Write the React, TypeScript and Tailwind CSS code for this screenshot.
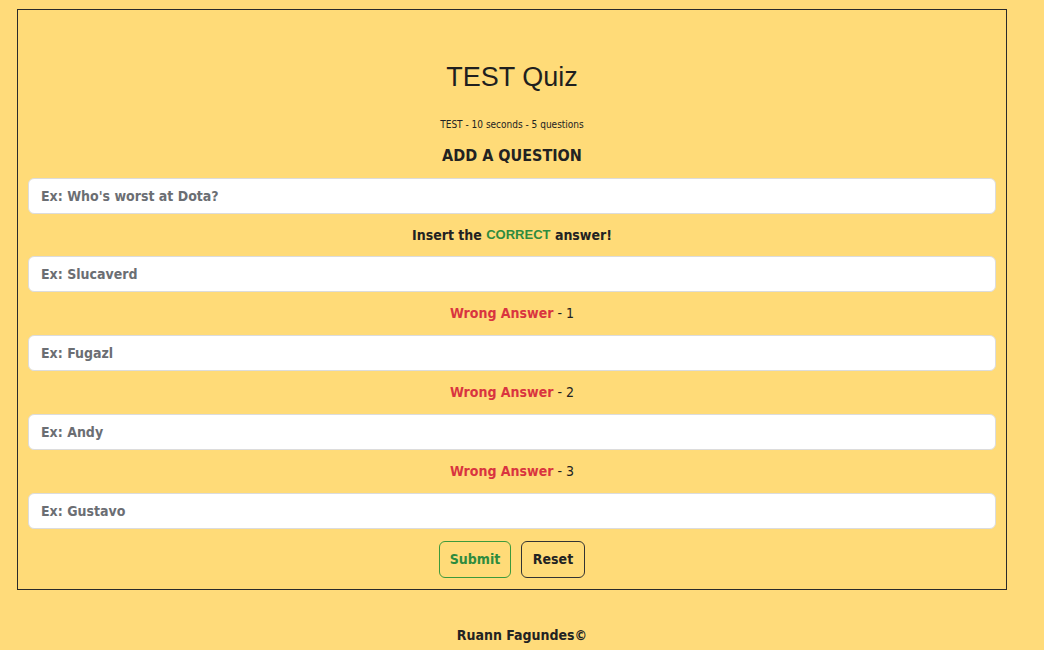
import React, { useState } from "react";

const narrow = "font-['Liberation_Sans_Narrow','DejaVu_Sans_Condensed',sans-serif]";

const App: React.FC = () => {
    const [question, setQuestion] = useState("");
    const [correct, setCorrect] = useState("");
    const [wrong, setWrong] = useState(["", "", ""]);
    const placeholders = ["Ex: Fugazl", "Ex: Andy", "Ex: Gustavo"];

    const handleReset = () => {
        setQuestion("");
        setCorrect("");
        setWrong(["", "", ""]);
    };

    const inputClass =
        "w-full h-[36px] rounded-md border border-[#dcdcdc] bg-white px-3 text-[14px] font-bold text-gray-700 placeholder:text-[#6b6e73] outline-none";

    return (
        <div className={`min-h-[650px] bg-[#ffdb7a] text-[#222] ${narrow}`}>
            <div className="pt-[9px] pl-[17px]">
                <div className="w-[990px] border border-[#2a2a2a] bg-[#ffdb78] px-[10px] pb-[11px]">
                    <h1 className="mt-[50px] text-center text-[27px] leading-[34px] font-['Liberation_Sans',sans-serif] text-[#1f1f1f]">
                        TEST Quiz
                    </h1>
                    <p className="mt-[24px] text-center text-[10px] leading-[14px]">TEST - 10 seconds - 5 questions</p>
                    <h2 className="mt-[14px] text-center text-[16px] leading-[20px] font-bold">ADD A QUESTION</h2>

                    <input
                        className={`${inputClass} mt-[12px]`}
                        placeholder="Ex: Who's worst at Dota?"
                        value={question}
                        onChange={(e) => setQuestion(e.target.value)}
                    />
                    <p className="h-[42px] flex items-center justify-center text-[14px] font-bold">
                        Insert the&nbsp;<span className="text-[#2e8b3e] font-['Liberation_Sans',sans-serif] text-[13px]">CORRECT</span>&nbsp;answer!
                    </p>
                    <input
                        className={inputClass}
                        placeholder="Ex: Slucaverd"
                        value={correct}
                        onChange={(e) => setCorrect(e.target.value)}
                    />

                    {wrong.map((w, idx) => (
                        <div key={idx}>
                            <p className="h-[43px] flex items-center justify-center text-[14px]">
                                <span className="text-[#d9343f] font-bold">Wrong Answer</span>&nbsp;- {idx + 1}
                            </p>
                            <input
                                className={inputClass}
                                placeholder={placeholders[idx]}
                                value={w}
                                onChange={(e) => {
                                    const next = [...wrong];
                                    next[idx] = e.target.value;
                                    setWrong(next);
                                }}
                            />
                        </div>
                    ))}

                    <div className="mt-[12px] flex justify-center gap-[10px]">
                        <button className="h-[37px] w-[72px] rounded-md border border-[#3c9a3c] text-[14px] font-bold text-[#2e8b3e] cursor-pointer">
                            Submit
                        </button>
                        <button
                            className="h-[37px] w-[64px] rounded-md border border-[#333] text-[14px] font-bold text-[#222] cursor-pointer"
                            onClick={handleReset}
                        >
                            Reset
                        </button>
                    </div>
                </div>
            </div>
            <footer className="mt-[35px] text-center text-[14px] font-bold">Ruann Fagundes©</footer>
        </div>
    );
};

export default App;
